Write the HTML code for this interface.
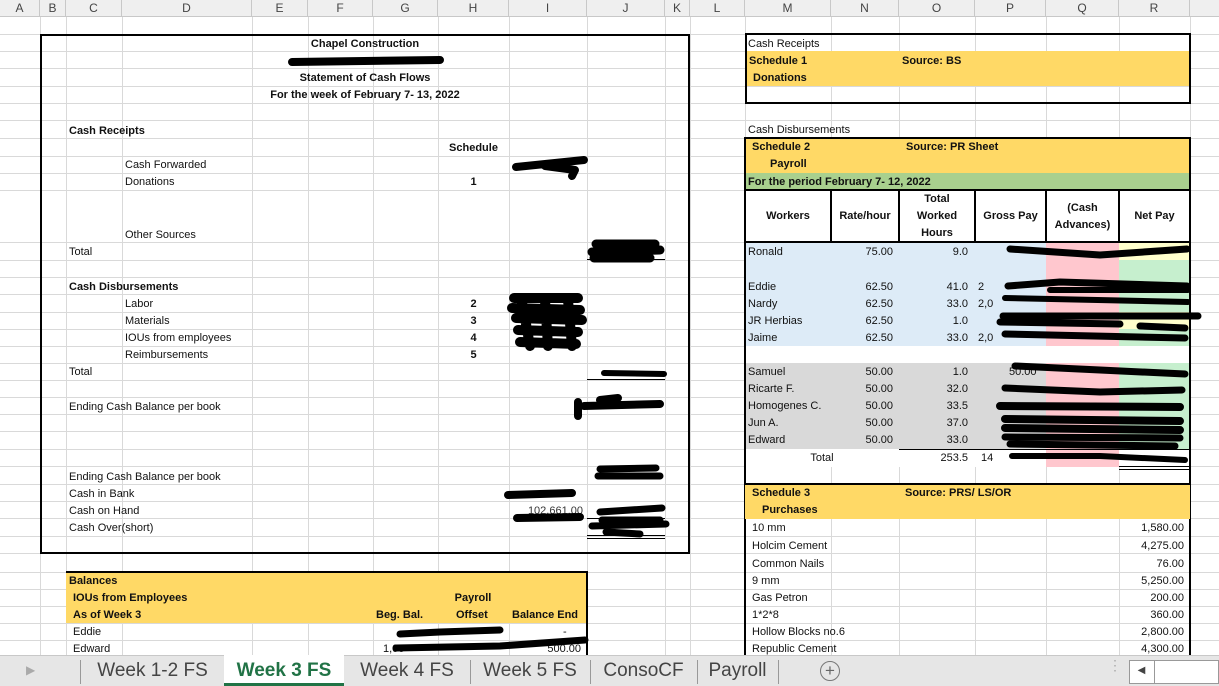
<!DOCTYPE html>
<html><head><meta charset="utf-8">
<style>
*{margin:0;padding:0;box-sizing:border-box}
body{width:1219px;height:686px;position:relative;overflow:hidden;background:#fff;font-family:"Liberation Sans",Arial,sans-serif;font-size:11px;color:#111}
.h{position:absolute;left:0;width:1219px;height:1px;background:#d9d9d9}
.v{position:absolute;top:17px;height:640px;width:1px;background:#d9d9d9}
.f{position:absolute}
.t{position:absolute;height:16px;line-height:16px;white-space:nowrap;font-size:11px}
.b{font-weight:bold}
.r{text-align:right}
.c{text-align:center}
.ch{position:absolute;top:0;height:17px;line-height:17px;text-align:center;color:#444;font-size:12px;border-right:1px solid #c8c8c8}
.bk{position:absolute;background:#000}
.tab{position:absolute;top:657px;height:29px;line-height:27px;font-size:19px;color:#444;text-align:center}
</style></head><body>
<!-- column header -->
<div class="f" style="left:0;top:0;width:1219px;height:17px;background:#efefef;border-bottom:1px solid #c8c8c8"></div>
<div class="ch" style="left:0;width:40px">A</div>
<div class="ch" style="left:40px;width:26px">B</div>
<div class="ch" style="left:66px;width:56px">C</div>
<div class="ch" style="left:122px;width:130px">D</div>
<div class="ch" style="left:252px;width:56px">E</div>
<div class="ch" style="left:308px;width:65px">F</div>
<div class="ch" style="left:373px;width:65px">G</div>
<div class="ch" style="left:438px;width:71px">H</div>
<div class="ch" style="left:509px;width:78px">I</div>
<div class="ch" style="left:587px;width:78px">J</div>
<div class="ch" style="left:665px;width:25px">K</div>
<div class="ch" style="left:690px;width:55px">L</div>
<div class="ch" style="left:745px;width:86px">M</div>
<div class="ch" style="left:831px;width:68px">N</div>
<div class="ch" style="left:899px;width:76px">O</div>
<div class="ch" style="left:975px;width:71px">P</div>
<div class="ch" style="left:1046px;width:73px">Q</div>
<div class="ch" style="left:1119px;width:71px">R</div>
<div class="ch" style="left:1190px;width:29px;border-right:none"></div>

<!-- gridlines -->
<div class="h" style="top:34px"></div><div class="h" style="top:51px"></div><div class="h" style="top:68px"></div><div class="h" style="top:86px"></div><div class="h" style="top:103px"></div><div class="h" style="top:120px"></div><div class="h" style="top:138px"></div><div class="h" style="top:156px"></div><div class="h" style="top:173px"></div><div class="h" style="top:190px"></div><div class="h" style="top:242px"></div><div class="h" style="top:260px"></div><div class="h" style="top:277px"></div><div class="h" style="top:294px"></div><div class="h" style="top:312px"></div><div class="h" style="top:329px"></div><div class="h" style="top:346px"></div><div class="h" style="top:363px"></div><div class="h" style="top:380px"></div><div class="h" style="top:397px"></div><div class="h" style="top:414px"></div><div class="h" style="top:431px"></div><div class="h" style="top:449px"></div><div class="h" style="top:466px"></div><div class="h" style="top:484px"></div><div class="h" style="top:501px"></div><div class="h" style="top:518px"></div><div class="h" style="top:536px"></div><div class="h" style="top:553px"></div><div class="h" style="top:572px"></div><div class="h" style="top:589px"></div><div class="h" style="top:606px"></div><div class="h" style="top:623px"></div><div class="h" style="top:640px"></div>
<div class="v" style="left:40px"></div><div class="v" style="left:66px"></div><div class="v" style="left:122px"></div><div class="v" style="left:252px"></div><div class="v" style="left:308px"></div><div class="v" style="left:373px"></div><div class="v" style="left:438px"></div><div class="v" style="left:509px"></div><div class="v" style="left:587px"></div><div class="v" style="left:665px"></div><div class="v" style="left:690px"></div><div class="v" style="left:745px"></div><div class="v" style="left:831px"></div><div class="v" style="left:899px"></div><div class="v" style="left:975px"></div><div class="v" style="left:1046px"></div><div class="v" style="left:1119px"></div><div class="v" style="left:1190px"></div>

<!-- LEFT main box -->
<div class="f" style="left:40px;top:34px;width:650px;height:520px;border:2px solid #000;background:transparent"></div>
<div class="t b c" style="left:40px;width:650px;top:36px">Chapel Construction</div>
<div class="t b c" style="left:40px;width:650px;top:70px">Statement of Cash Flows</div>
<div class="t b c" style="left:40px;width:650px;top:87px">For the week of February 7- 13, 2022</div>
<div class="t b" style="left:69px;top:123px">Cash Receipts</div>
<div class="t b c" style="left:438px;width:71px;top:140px">Schedule</div>
<div class="t" style="left:125px;top:157px">Cash Forwarded</div>
<div class="t" style="left:125px;top:174px">Donations</div>
<div class="t b c" style="left:438px;width:71px;top:174px">1</div>
<div class="t" style="left:125px;top:227px">Other Sources</div>
<div class="t" style="left:69px;top:244px">Total</div>
<div class="bk" style="left:587px;top:259px;width:78px;height:1px"></div>
<div class="t b" style="left:69px;top:279px">Cash Disbursements</div>
<div class="t" style="left:125px;top:296px">Labor</div>
<div class="t" style="left:125px;top:313px">Materials</div>
<div class="t" style="left:125px;top:330px">IOUs from employees</div>
<div class="t" style="left:125px;top:347px">Reimbursements</div>
<div class="t b c" style="left:438px;width:71px;top:296px">2</div>
<div class="t b c" style="left:438px;width:71px;top:313px">3</div>
<div class="t b c" style="left:438px;width:71px;top:330px">4</div>
<div class="t b c" style="left:438px;width:71px;top:347px">5</div>
<div class="t" style="left:69px;top:364px">Total</div>
<div class="bk" style="left:587px;top:379px;width:78px;height:1px"></div>
<div class="t" style="left:69px;top:399px">Ending Cash Balance per book</div>
<div class="t" style="left:69px;top:469px">Ending Cash Balance per book</div>
<div class="t" style="left:69px;top:486px">Cash in Bank</div>
<div class="t" style="left:69px;top:503px">Cash on Hand</div>
<div class="t" style="left:69px;top:520px">Cash Over(short)</div>
<div class="t r" style="left:509px;width:74px;top:503px;color:#333">102,661.00</div>
<div class="bk" style="left:587px;top:518px;width:78px;height:1px"></div>
<div class="bk" style="left:587px;top:535px;width:78px;height:1px"></div>
<div class="bk" style="left:587px;top:538px;width:78px;height:1px"></div>

<!-- Balances box -->
<div class="f" style="left:66px;top:571px;width:522px;height:52px;background:#ffd966;border-top:2px solid #000"></div>
<div class="bk" style="left:586px;top:571px;width:2px;height:86px"></div>
<div class="t b" style="left:69px;top:573px">Balances</div>
<div class="t b" style="left:73px;top:590px">IOUs from Employees</div>
<div class="t b c" style="left:509px;width:78px;top:590px;left:434px">Payroll</div>
<div class="t b" style="left:73px;top:607px">As of Week 3</div>
<div class="t b" style="left:376px;top:607px">Beg. Bal.</div>
<div class="t b" style="left:456px;top:607px">Offset</div>
<div class="t b" style="left:512px;top:607px">Balance End</div>
<div class="t" style="left:73px;top:624px">Eddie</div>
<div class="t" style="left:73px;top:641px">Edward</div>
<div class="t" style="left:563px;top:624px">-</div>
<div class="t r" style="left:509px;width:72px;top:641px">500.00</div>
<div class="t" style="left:383px;top:641px">1,00</div>

<!-- RIGHT: schedule 1 -->
<div class="f" style="left:745px;top:51px;width:445px;height:35px;background:#ffd966"></div>
<div class="f" style="left:745px;top:33px;width:446px;height:71px;border:2px solid #000"></div>
<div class="t" style="left:748px;top:36px">Cash Receipts</div>
<div class="t b" style="left:749px;top:53px">Schedule 1</div>
<div class="t b" style="left:902px;top:53px">Source: BS</div>
<div class="t b" style="left:753px;top:70px">Donations</div>
<div class="t" style="left:748px;top:122px">Cash Disbursements</div>

<!-- schedule 2 -->
<div class="f" style="left:745px;top:138px;width:445px;height:35px;background:#ffd966"></div>
<div class="f" style="left:745px;top:173px;width:445px;height:17px;background:#a9d08e"></div>
<div class="f" style="left:745px;top:190px;width:445px;height:53px;background:#fff"></div>
<div class="f" style="left:745px;top:243px;width:301px;height:103px;background:#ddebf7"></div>
<div class="f" style="left:745px;top:363px;width:301px;height:86px;background:#d9d9d9"></div>
<div class="f" style="left:1046px;top:243px;width:73px;height:224px;background:#ffc7ce"></div>
<div class="f" style="left:1119px;top:243px;width:71px;height:206px;background:#c6efce"></div>
<div class="f" style="left:1119px;top:243px;width:71px;height:17px;background:#ffffcc"></div>
<div class="f" style="left:1119px;top:312px;width:71px;height:17px;background:#ffffcc"></div>
<div class="f" style="left:745px;top:346px;width:445px;height:17px;background:#fff"></div>
<div class="f" style="left:745px;top:449px;width:301px;height:18px;background:#fff"></div>
<div class="f" style="left:1119px;top:449px;width:71px;height:18px;background:#fff"></div>
<!-- header grid lines -->
<div class="bk" style="left:745px;top:189px;width:445px;height:2px"></div>
<div class="bk" style="left:745px;top:241px;width:445px;height:2px"></div>
<div class="bk" style="left:830px;top:190px;width:2px;height:52px"></div>
<div class="bk" style="left:898px;top:190px;width:2px;height:52px"></div>
<div class="bk" style="left:974px;top:190px;width:2px;height:52px"></div>
<div class="bk" style="left:1045px;top:190px;width:2px;height:52px"></div>
<div class="bk" style="left:1118px;top:190px;width:2px;height:52px"></div>
<div class="bk" style="left:899px;top:449px;width:291px;height:1px"></div>
<div class="bk" style="left:1119px;top:466px;width:71px;height:1px"></div>
<div class="bk" style="left:1119px;top:469px;width:71px;height:1px"></div>
<div class="f" style="left:744px;top:137px;width:447px;height:520px;border:2px solid #000;border-bottom:none"></div>
<div class="t b" style="left:752px;top:139px">Schedule 2</div>
<div class="t b" style="left:906px;top:139px">Source: PR Sheet</div>
<div class="t b" style="left:770px;top:156px">Payroll</div>
<div class="t b" style="left:748px;top:174px">For the period February 7- 12, 2022</div>
<div class="t b c" style="left:745px;width:86px;top:208px">Workers</div>
<div class="t b c" style="left:831px;width:68px;top:208px">Rate/hour</div>
<div class="t b c" style="left:899px;width:76px;top:191px">Total</div>
<div class="t b c" style="left:899px;width:76px;top:208px">Worked</div>
<div class="t b c" style="left:899px;width:76px;top:225px">Hours</div>
<div class="t b c" style="left:975px;width:71px;top:208px">Gross Pay</div>
<div class="t b c" style="left:1046px;width:73px;top:200px">(Cash</div>
<div class="t b c" style="left:1046px;width:73px;top:217px">Advances)</div>
<div class="t b c" style="left:1119px;width:71px;top:208px">Net Pay</div>

<div class="t" style="left:748px;top:244px">Ronald</div><div class="t r" style="left:831px;width:62px;top:244px">75.00</div><div class="t r" style="left:899px;width:69px;top:244px">9.0</div>
<div class="t" style="left:748px;top:279px">Eddie</div><div class="t r" style="left:831px;width:62px;top:279px">62.50</div><div class="t r" style="left:899px;width:69px;top:279px">41.0</div><div class="t" style="left:978px;top:279px">2</div>
<div class="t" style="left:748px;top:296px">Nardy</div><div class="t r" style="left:831px;width:62px;top:296px">62.50</div><div class="t r" style="left:899px;width:69px;top:296px">33.0</div><div class="t" style="left:978px;top:296px">2,0</div>
<div class="t" style="left:748px;top:313px">JR Herbias</div><div class="t r" style="left:831px;width:62px;top:313px">62.50</div><div class="t r" style="left:899px;width:69px;top:313px">1.0</div>
<div class="t" style="left:748px;top:330px">Jaime</div><div class="t r" style="left:831px;width:62px;top:330px">62.50</div><div class="t r" style="left:899px;width:69px;top:330px">33.0</div><div class="t" style="left:978px;top:330px">2,0</div>
<div class="t" style="left:748px;top:364px">Samuel</div><div class="t r" style="left:831px;width:62px;top:364px">50.00</div><div class="t r" style="left:899px;width:69px;top:364px">1.0</div><div class="t" style="left:1009px;top:364px">50.00</div>
<div class="t" style="left:748px;top:381px">Ricarte F.</div><div class="t r" style="left:831px;width:62px;top:381px">50.00</div><div class="t r" style="left:899px;width:69px;top:381px">32.0</div>
<div class="t" style="left:748px;top:398px">Homogenes C.</div><div class="t r" style="left:831px;width:62px;top:398px">50.00</div><div class="t r" style="left:899px;width:69px;top:398px">33.5</div>
<div class="t" style="left:748px;top:415px">Jun A.</div><div class="t r" style="left:831px;width:62px;top:415px">50.00</div><div class="t r" style="left:899px;width:69px;top:415px">37.0</div>
<div class="t" style="left:748px;top:432px">Edward</div><div class="t r" style="left:831px;width:62px;top:432px">50.00</div><div class="t r" style="left:899px;width:69px;top:432px">33.0</div>
<div class="t c" style="left:745px;width:154px;top:450px">Total</div><div class="t r" style="left:899px;width:69px;top:450px">253.5</div><div class="t" style="left:981px;top:450px">14</div>

<!-- schedule 3 -->
<div class="f" style="left:745px;top:485px;width:445px;height:34px;background:#ffd966"></div>
<div class="bk" style="left:745px;top:483px;width:446px;height:2px"></div>
<div class="t b" style="left:752px;top:485px">Schedule 3</div>
<div class="t b" style="left:905px;top:485px">Source: PRS/ LS/OR</div>
<div class="t b" style="left:762px;top:502px">Purchases</div>
<div class="t" style="left:752px;top:520px">10 mm</div><div class="t r" style="left:1100px;width:84px;top:520px">1,580.00</div>
<div class="t" style="left:752px;top:538px">Holcim Cement</div><div class="t r" style="left:1100px;width:84px;top:538px">4,275.00</div>
<div class="t" style="left:752px;top:556px">Common Nails</div><div class="t r" style="left:1100px;width:84px;top:556px">76.00</div>
<div class="t" style="left:752px;top:573px">9 mm</div><div class="t r" style="left:1100px;width:84px;top:573px">5,250.00</div>
<div class="t" style="left:752px;top:590px">Gas Petron</div><div class="t r" style="left:1100px;width:84px;top:590px">200.00</div>
<div class="t" style="left:752px;top:607px">1*2*8</div><div class="t r" style="left:1100px;width:84px;top:607px">360.00</div>
<div class="t" style="left:752px;top:624px">Hollow Blocks no.6</div><div class="t r" style="left:1100px;width:84px;top:624px">2,800.00</div>
<div class="t" style="left:752px;top:641px">Republic Cement</div><div class="t r" style="left:1100px;width:84px;top:641px">4,300.00</div>

<!-- scribbles -->
<svg class="f" style="left:0;top:0" width="1219" height="686" fill="none" stroke="#000" stroke-linecap="round" stroke-linejoin="round">
<g stroke-width="8">
<path d="M292 62 L440 60"/>
<path d="M516 167 L584 160 M545 166 L575 170 L572 176"/>
<path d="M596 244 L655 244 M592 252 L660 250 M594 258 L650 258" stroke-width="9"/>
<path d="M514 298 L578 298 M512 308 L580 310 M516 318 L582 320 M518 330 L578 332 M520 342 L576 344 M522 302 L530 346 M545 300 L548 346 M568 300 L572 346" stroke-width="10"/>
<path d="M604 373 L664 374" stroke-width="6"/>
<path d="M578 402 L578 416 M584 406 L660 404 M600 400 L618 398"/>
<path d="M600 469 L656 468 M598 476 L660 476" stroke-width="7"/>
<path d="M508 495 L572 493"/>
<path d="M517 518 L580 517"/>
<path d="M600 512 L662 508 M602 520 L660 520 M592 526 L666 524 M606 532 L640 534" stroke-width="7"/>
<path d="M1010 249 L1100 255 L1187 249" stroke-width="7"/>
<path d="M1008 286 L1060 282 L1187 286" stroke-width="7"/>
<path d="M1050 290 L1188 290 M1005 298 L1188 302" stroke-width="6"/>
<path d="M1003 316 L1198 316 M1000 322 L1120 324" stroke-width="7"/>
<path d="M1005 334 L1185 338 M1140 326 L1185 328" stroke-width="7"/>
<path d="M1015 366 L1100 370 L1185 374" stroke-width="7"/>
<path d="M1005 388 L1100 392 L1182 390" stroke-width="7"/>
<path d="M1000 406 L1180 407" stroke-width="8"/>
<path d="M1005 419 L1180 421 M1005 428 L1180 430" stroke-width="8"/>
<path d="M1005 437 L1180 438 M1010 444 L1175 446" stroke-width="7"/>
<path d="M1012 456 L1100 456 L1185 460" stroke-width="6"/>
<path d="M400 634 L440 632 L500 630" stroke-width="7"/>
<path d="M396 648 L500 646 L585 640" stroke-width="7"/>
</g>
</svg>

<!-- sheet tabs -->
<div class="f" style="left:0;top:655px;width:1219px;height:31px;background:#e6e6e6;border-top:1px solid #c8c8c8"></div>
<div class="f" style="left:26px;top:663px;color:#aaa;font-size:12px">&#9654;</div>
<div class="f" style="left:80px;top:660px;width:1px;height:24px;background:#999"></div>
<div class="tab" style="left:81px;width:143px">Week 1-2 FS</div>
<div class="f" style="left:224px;top:655px;width:120px;height:31px;background:#fff;border-bottom:3px solid #217346"></div>
<div class="tab b" style="left:224px;width:120px;color:#217346">Week 3 FS</div>
<div class="tab" style="left:344px;width:126px">Week 4 FS</div>
<div class="f" style="left:470px;top:660px;width:1px;height:24px;background:#999"></div>
<div class="tab" style="left:470px;width:120px">Week 5 FS</div>
<div class="f" style="left:590px;top:660px;width:1px;height:24px;background:#999"></div>
<div class="tab" style="left:590px;width:107px">ConsoCF</div>
<div class="f" style="left:697px;top:660px;width:1px;height:24px;background:#999"></div>
<div class="tab" style="left:697px;width:81px">Payroll</div>
<div class="f" style="left:778px;top:660px;width:1px;height:24px;background:#999"></div>
<div class="f" style="left:820px;top:661px;width:20px;height:20px;border:1px solid #777;border-radius:50%;text-align:center;line-height:17px;font-size:17px;color:#666">+</div>
<div class="f" style="left:1108px;top:662px;color:#aaa;font-size:14px;line-height:6px">&#8942;</div>
<div class="f" style="left:1129px;top:660px;width:90px;height:24px;background:#fff;border:1px solid #999"></div>
<div class="f" style="left:1129px;top:660px;width:26px;height:24px;border-right:1px solid #999;text-align:center;line-height:22px;font-size:10px;color:#444">&#9664;</div>
</body></html>
